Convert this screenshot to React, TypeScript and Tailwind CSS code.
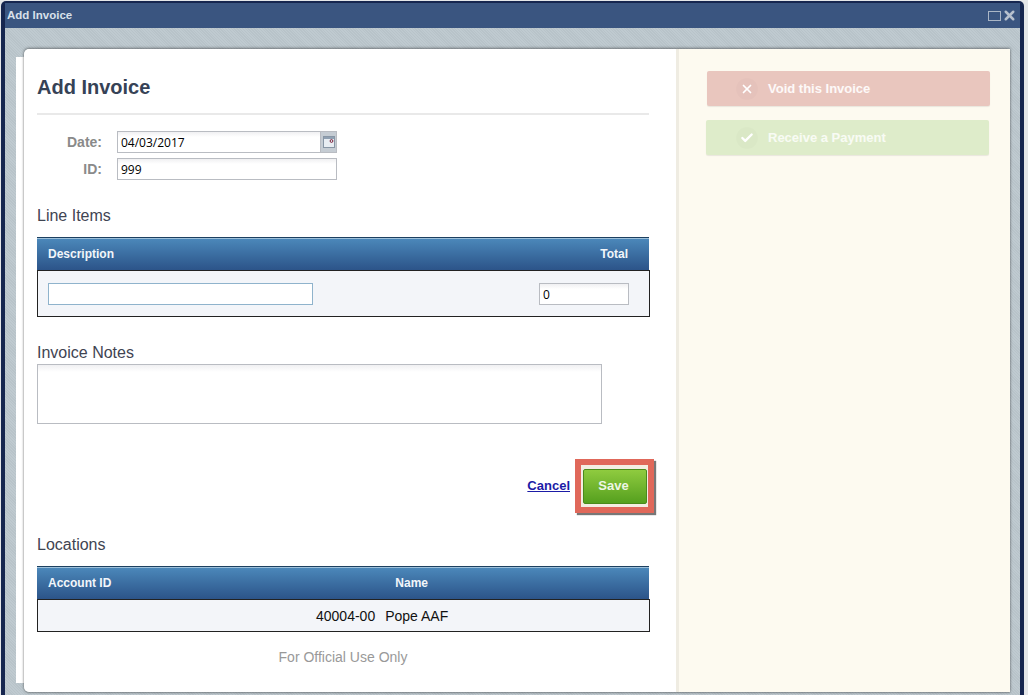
import { Check, X } from "lucide-react";

const SANS = "font-['Liberation_Sans',Arial,sans-serif]";
const inputCls =
    "block h-[22px] border border-[#b9bcc2] bg-gradient-to-b from-[#f0f0f2] to-white to-[25%] px-[3px] text-[12px] text-black outline-none font-['Open_Sans',sans-serif]";

function TableHead({ left, right, rightCls }: { left: string; right: string; rightCls: string }) {
    return (
        <div className="flex h-[33px] items-center border-t border-t-[#1d4060] bg-gradient-to-b from-[#4c89bb] to-[#2c5489] pl-[11px] text-[12px] font-bold text-[#f2f6fa] shadow-[inset_0_1px_0_#9dc0da]">
            <span>{left}</span>
            <span className={rightCls}>{right}</span>
        </div>
    );
}

function SideButton({ label, cls, icon }: { label: string; cls: string; icon: React.ReactNode }) {
    return (
        <div className={`flex h-[35px] w-[283px] items-center rounded-[2px] text-[13px] font-bold shadow-[0_1px_1px_rgba(0,0,0,0.08)] ${cls}`}>
            <span className="flex h-[22px] w-[22px] items-center justify-center rounded-full bg-black/[0.015]">{icon}</span>
            <span className="ml-[10px]">{label}</span>
        </div>
    );
}

export default function App() {
    return (
        <div className={`h-[695px] w-[1028px] overflow-hidden bg-[#e4e6e8] pl-[1px] pt-[1px] ${SANS}`}>
            <div className="flex h-[700px] w-[1023px] flex-col rounded-t-[5px] border-x-[4px] border-t-[2px] border-[#16264f] bg-[#bcc7cd]">
                {/* title bar */}
                <div className="flex h-[25px] shrink-0 items-center justify-between bg-[#3a5580] pl-[2px] pr-[3px] text-[11.5px] font-bold text-[#d8e0ea]">
                    <span>Add Invoice</span>
                    <div className="flex items-center gap-[1px]">
                        <span className="h-[10px] w-[13px] border border-[#aab6c6]" />
                        <X size={15} strokeWidth={4} className="text-[#b6c0cd]" />
                    </div>
                </div>

                {/* body */}
                <div className="flex flex-1 items-start bg-[repeating-linear-gradient(45deg,#bfcad0_0,#bfcad0_1px,#b8c3c9_1px,#b8c3c9_2px)] pl-[11px] pt-[21px]">
                    <div className="mt-[8px] h-[626px] w-[8px] bg-white" />
                    <div className="flex h-[643px] w-[986px] overflow-hidden rounded-tl-[5px] rounded-bl-[5px] shadow-[0_-1px_3px_rgba(0,0,0,0.4),0_1px_2px_rgba(0,0,0,0.3)]">
                        <div className="w-[652px] shrink-0 bg-white pl-[13px]">
                            <div className="w-[612px]">
                                <h1 className="mt-[25px] text-[20px] font-bold leading-[26px] text-[#364256]">Add Invoice</h1>
                                <div className="mt-[13px] h-[2px] bg-[#e9e9e9]" />

                                <div className="mt-[16px] flex items-center">
                                    <span className="w-[65px] text-right text-[14px] font-bold text-[#8a8a8a]">Date:</span>
                                    <div className="relative ml-[15px]">
                                        <input readOnly defaultValue="04/03/2017" className={`${inputCls} w-[220px]`} />
                                        <span className="absolute right-0 top-0 flex h-[22px] w-[17px] items-center justify-center border border-[#b9bcc2] bg-[#c5ccd3]">
                                            <svg width="12" height="12" viewBox="0 0 12 12">
                                                <rect x="0.5" y="0.5" width="11" height="11" fill="#e8edf2" stroke="#8896a5" />
                                                <rect x="1" y="1" width="10" height="2" fill="#8fa0b2" />
                                                <circle cx="8.5" cy="5" r="1.4" fill="none" stroke="#7a1f3a" />
                                            </svg>
                                        </span>
                                    </div>
                                </div>
                                <div className="mt-[5px] flex items-center">
                                    <span className="w-[65px] text-right text-[14px] font-bold text-[#8a8a8a]">ID:</span>
                                    <input readOnly defaultValue="999" className={`${inputCls} ml-[15px] w-[220px]`} />
                                </div>

                                <h2 className="mt-[27px] text-[16px] leading-[18px] text-[#3f4452]">Line Items</h2>
                                <div className="mt-[12px]">
                                    <TableHead left="Description" right="Total" rightCls="ml-auto mr-[21px]" />
                                    <div className="flex h-[47px] w-[613px] items-center justify-between border border-[#222] bg-[#f3f5f9] pl-[10px] pr-[20px] pt-[1px]">
                                        <input readOnly className="block h-[22px] w-[265px] border border-[#8fb3cc] bg-white outline-none" />
                                        <input readOnly defaultValue="0" className={`${inputCls} w-[90px]`} />
                                    </div>
                                </div>

                                <h2 className="mt-[27px] text-[16px] leading-[18px] text-[#3f4452]">Invoice Notes</h2>
                                <textarea readOnly className="mt-[2px] block h-[60px] w-[565px] resize-none border border-[#b9bcc2] bg-gradient-to-b from-[#f0f0f2] to-white to-[12%] outline-none" />

                                <div className="mt-[35px] flex items-center justify-end">
                                    <a href="#" className="mr-[5px] text-[13px] font-bold text-[#1b1ba6] underline">Cancel</a>
                                    <div className="-mr-[5px] flex h-[54px] w-[79px] items-center justify-center border-[6px] border-[#e0685a] bg-[#f3eee2] shadow-[2px_2px_1px_#777]">
                                        <button className="h-[35px] w-[64px] rounded-[2px] border border-[#4a8a1c] bg-gradient-to-b from-[#8fcb3f] to-[#55a01e] pr-[2px] text-[13px] font-bold text-[#eef6e4]">Save</button>
                                    </div>
                                </div>

                                <h2 className="mt-[23px] text-[16px] leading-[18px] text-[#3f4452]">Locations</h2>
                                <div className="mt-[12px]">
                                    <TableHead left="Account ID" right="Name" rightCls="ml-[284px]" />
                                    <div className="flex h-[33px] w-[613px] items-center border border-[#222] bg-[#f3f5f9] pl-[278px] pt-[2px] text-[14px] text-[#111]">
                                        <span>40004-00</span>
                                        <span className="ml-[10px]">Pope AAF</span>
                                    </div>
                                </div>
                                <p className="mt-[15px] text-center text-[14px] text-[#999]">For Official Use Only</p>
                            </div>
                        </div>

                        <div className="flex-1 border-l-[3px] border-l-[#efece2] bg-[#fdfaf0] pl-[27px] pt-[22px]">
                            <SideButton
                                label="Void this Invoice"
                                cls="ml-[1px] bg-[#e9c6be] pl-[29px] text-white/90"
                                icon={<X size={14} strokeWidth={3} className="text-white" />}
                            />
                            <div className="h-[14px]" />
                            <SideButton
                                label="Receive a Payment"
                                cls="bg-[#deecca] pl-[30px] text-white/80"
                                icon={<Check size={14} strokeWidth={4} className="text-white" />}
                            />
                        </div>
                    </div>
                </div>
            </div>
        </div>
    );
}
